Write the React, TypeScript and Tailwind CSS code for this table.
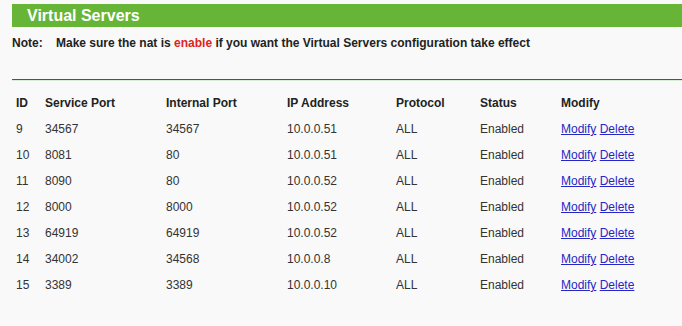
import React from 'react';

type Rule = {
  id: number;
  service: string;
  internal: string;
  ip: string;
  protocol: string;
  status: string;
};

const rules: Rule[] = [
  { id: 9, service: '34567', internal: '34567', ip: '10.0.0.51', protocol: 'ALL', status: 'Enabled' },
  { id: 10, service: '8081', internal: '80', ip: '10.0.0.51', protocol: 'ALL', status: 'Enabled' },
  { id: 11, service: '8090', internal: '80', ip: '10.0.0.52', protocol: 'ALL', status: 'Enabled' },
  { id: 12, service: '8000', internal: '8000', ip: '10.0.0.52', protocol: 'ALL', status: 'Enabled' },
  { id: 13, service: '64919', internal: '64919', ip: '10.0.0.52', protocol: 'ALL', status: 'Enabled' },
  { id: 14, service: '34002', internal: '34568', ip: '10.0.0.8', protocol: 'ALL', status: 'Enabled' },
  { id: 15, service: '3389', internal: '3389', ip: '10.0.0.10', protocol: 'ALL', status: 'Enabled' },
];

const cols = 'grid grid-cols-[29px_121px_121px_109px_84px_81px_1fr] pl-[4px]';

export default function App() {
  return (
    <div
      className="min-h-[326px] w-[682px] bg-[#f9f9f9] pl-[12px] pt-[4px] text-[12px] text-[#222]"
      style={{ fontFamily: '"Liberation Sans", Arial, sans-serif' }}
    >
      <div className="h-[23px] bg-[#66b536] pl-[15px] text-[16px] font-bold leading-[23px] text-white">
        Virtual Servers
      </div>

      <div className="mt-[9px] flex font-bold leading-[14px]">
        <span className="w-[44px]">Note:</span>
        <span>
          Make sure the nat is <span className="text-[#e0211b]">enable</span> if you want the Virtual Servers
          configuration take effect
        </span>
      </div>

      <div className="mt-[29px] h-[2px] border-t border-[#2d6a3c] bg-[#d8ecd8]" />

      <div className={`${cols} mt-[9px] h-[26px] items-center font-bold`}>
        <span>ID</span>
        <span>Service Port</span>
        <span>Internal Port</span>
        <span>IP Address</span>
        <span>Protocol</span>
        <span>Status</span>
        <span>Modify</span>
      </div>

      {rules.map((r) => (
        <div key={r.id} className={`${cols} h-[26px] items-center text-[#333]`}>
          <span>{r.id}</span>
          <span>{r.service}</span>
          <span>{r.internal}</span>
          <span>{r.ip}</span>
          <span>{r.protocol}</span>
          <span>{r.status}</span>
          <span className="text-[#2626c4]">
            <a href="#" className="underline">Modify</a> <a href="#" className="underline">Delete</a>
          </span>
        </div>
      ))}
    </div>
  );
}
